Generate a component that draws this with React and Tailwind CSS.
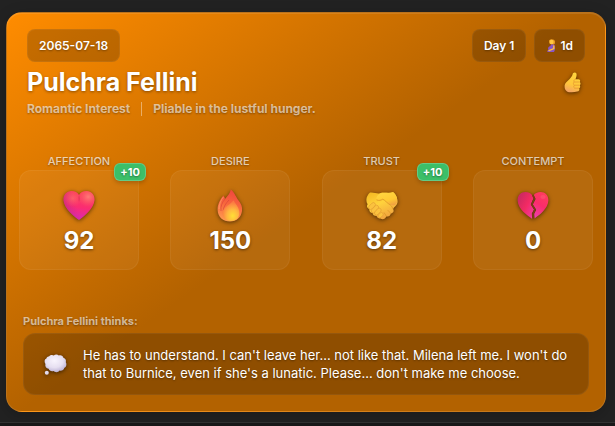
import React from "react";

const glow = "overflow-visible drop-shadow-[0_1px_2px_rgba(0,0,0,0.55)]";

const HEART =
  "M16 30C12 27 1 19 0.5 10C0.3 4.5 4 1 8.5 1C12 1 14.5 2.6 16 5C17.5 2.6 20 1 23.5 1C28 1 31.7 4.5 31.5 10C31 19 20 27 16 30Z";

function Heart() {
  return (
    <svg viewBox="0 0 32 31" className={`h-[31px] w-8 ${glow}`} aria-hidden="true">
      <defs>
        <linearGradient id="heartBase" x1="0.55" y1="0" x2="0.4" y2="1">
          <stop offset="0" stopColor="#fb4458" />
          <stop offset="0.55" stopColor="#fb2c72" />
          <stop offset="1" stopColor="#d529b8" />
        </linearGradient>
        <radialGradient id="heartLeft" cx="0.3" cy="0.25" r="0.3">
          <stop offset="0" stopColor="#ff6f6b" stopOpacity="0.7" />
          <stop offset="1" stopColor="#ff5a66" stopOpacity="0" />
        </radialGradient>
        <radialGradient id="heartRight" cx="0.8" cy="0.2" r="0.35">
          <stop offset="0" stopColor="#ff7a76" />
          <stop offset="1" stopColor="#ff5a66" stopOpacity="0" />
        </radialGradient>
        <linearGradient id="heartEdge" x1="0" y1="0.5" x2="0.4" y2="0.4">
          <stop offset="0" stopColor="#a82a92" stopOpacity="0.5" />
          <stop offset="1" stopColor="#c02a8a" stopOpacity="0" />
        </linearGradient>
      </defs>
      <path d={HEART} fill="url(#heartBase)" />
      <path d={HEART} fill="url(#heartEdge)" />
      <path d={HEART} fill="url(#heartLeft)" />
      <path d={HEART} fill="url(#heartRight)" />
      <path d="M16 5C15.6 7 15.6 9 16 12C16.7 9 16.6 7 16 5Z" fill="#c81e4f" opacity="0.7" />
    </svg>
  );
}

function Flame() {
  return (
    <svg viewBox="0 0 26 33" className={`h-[33px] w-[26px] ${glow}`} aria-hidden="true">
      <defs>
        <linearGradient id="flameOuter" x1="0.6" y1="0" x2="0.4" y2="1">
          <stop offset="0" stopColor="#f0443f" />
          <stop offset="0.5" stopColor="#f86a3c" />
          <stop offset="1" stopColor="#ff9a50" />
        </linearGradient>
        <radialGradient id="flameInner" cx="0.6" cy="0.75" r="0.65">
          <stop offset="0" stopColor="#ffdf35" />
          <stop offset="0.5" stopColor="#ffb740" />
          <stop offset="1" stopColor="#fb7b42" />
        </radialGradient>
      </defs>
      <path
        d="M13.8 0.5C18 4 19.2 8.5 21.2 11C24.2 14.6 25.5 18 25 22C24.2 28.6 19.2 32.5 13 32.5C6 32.5 0.8 28 0.6 21C0.4 15.2 3.2 10.4 6.4 6.5C7.2 7.6 7.8 8.6 8 10C10.6 7.2 13.2 4.2 13.8 0.5Z"
        fill="url(#flameOuter)"
      />
      <path d="M8 10C5.2 13.4 3.4 17 4 22M12 11C9 14.2 6.4 17.6 6.2 22" fill="none" stroke="#d9433b" strokeWidth="0.9" opacity="0.75" />
      <path d="M6.4 8C4 11 2 15 2 20" fill="none" stroke="#ffac7d" strokeWidth="0.8" opacity="0.7" />
      <path
        d="M16.5 11.5C18.6 15 22.4 18.6 22.4 24C22.4 29 18.6 32 14 32C9 32 5.6 28.8 5.6 24C5.6 18.4 11.8 16.8 16.5 11.5Z"
        fill="url(#flameInner)"
      />
    </svg>
  );
}

function Handshake() {
  return (
    <svg viewBox="0 0 33 29" className={`h-[29px] w-[33px] ${glow}`} aria-hidden="true">
      <defs>
        <linearGradient id="handBack" x1="0" y1="0" x2="0.5" y2="1">
          <stop offset="0" stopColor="#f3b51f" />
          <stop offset="0.5" stopColor="#ffd23c" />
          <stop offset="1" stopColor="#f2a63f" />
        </linearGradient>
        <linearGradient id="handFront" x1="0.3" y1="0" x2="0.8" y2="1">
          <stop offset="0" stopColor="#ffd640" />
          <stop offset="0.6" stopColor="#ffc933" />
          <stop offset="1" stopColor="#f09d42" />
        </linearGradient>
      </defs>
      <path
        d="M5 1.5C9 1 12 3 15 2.2C19 0.8 24 2.6 28 1C31 3 33 8 32.4 12C31.8 14.6 29 16 28 18C29.6 20.2 28 22.6 25.8 22.4C25.4 24.8 23.4 26 21.4 25.2C20.4 28 17.6 29 15.4 27.4C13.4 27.6 12 26.6 11.6 25C9.2 25 7.6 23.8 7.6 22C5.2 21.8 4 20 4.4 18C2 17.4 1.4 15 2.6 13.2C0 9 1.8 4.4 5 1.5Z"
        fill="url(#handBack)"
      />
      <path
        d="M15 2.4C19 1.4 24 2.8 28 1.2C31 3 33 8 32 11.6C30.6 14.8 27.6 15.4 24.6 13.2C21.6 11.4 20 9 17.8 8.2C15.8 9.4 13.4 10 11.6 8.8C10.8 6.2 12.8 3.6 15 2.4Z"
        fill="url(#handFront)"
      />
      <path
        d="M11.8 9C14 10 16 9.2 17.8 8.2C20.4 9.4 22 12.2 25.4 14C26.6 15 27.4 16.4 28 18"
        fill="none"
        stroke="#dd9426"
        strokeWidth="0.8"
        strokeLinecap="round"
      />
      <path d="M23 19.4L25.8 22.4M19.2 21.8L21.4 25.2" fill="none" stroke="#dd9426" strokeWidth="0.8" strokeLinecap="round" />
      <g fill="#fbc23e" stroke="#dd9430" strokeWidth="0.5">
        <rect x="3" y="13" width="8" height="4" rx="2" transform="rotate(-45 7 15)" />
        <rect x="5.4" y="16" width="9" height="4" rx="2" transform="rotate(-48 10 18)" />
        <rect x="9.2" y="18.6" width="8" height="4" rx="2" transform="rotate(-48 13 21)" />
        <rect x="12.6" y="22" width="6" height="3.6" rx="1.8" transform="rotate(-48 16 24)" />
      </g>
    </svg>
  );
}

function BrokenHeart() {
  return (
    <svg viewBox="0 0 32 29" className={`h-[29px] w-8 ${glow}`} aria-hidden="true">
      <defs>
        <linearGradient id="brokenLeft" x1="0.1" y1="0.2" x2="0.9" y2="0.9">
          <stop offset="0" stopColor="#cd2962" />
          <stop offset="0.5" stopColor="#f22a63" />
          <stop offset="1" stopColor="#f13a9f" />
        </linearGradient>
        <linearGradient id="brokenRight" x1="0.7" y1="0" x2="0.3" y2="1">
          <stop offset="0" stopColor="#ff3d5c" />
          <stop offset="0.5" stopColor="#fb2c6c" />
          <stop offset="1" stopColor="#ef3dab" />
        </linearGradient>
      </defs>
      <path
        d="M15.2 28C11 25 1 18.4 0.6 9.6C0.4 4.4 4 1 8.4 1C11.4 1 13.6 2.2 15 4L16.4 7.6L13.8 13.4L17 18.6L14.8 22.6Z"
        fill="url(#brokenLeft)"
      />
      <path
        d="M17.6 27.4C21.8 24.6 31 18 31.4 9.6C31.6 4.4 28 1 23.6 1C20.4 1 18 2.4 16.8 4L18.6 8L15.8 13.4L19.2 18.8L17.2 22.8Z"
        fill="url(#brokenRight)"
      />
      <path d="M15.8 4L17.4 7.8L14.8 13.4L18 18.6L16 22.8L16.4 27.6" fill="none" stroke="#7a3d14" strokeWidth="1.6" />
      <ellipse cx="26" cy="6" rx="2.6" ry="2" fill="#ff7484" opacity="0.3" />
    </svg>
  );
}

function ThumbsUp() {
  return (
    <svg viewBox="0 0 17 21" className={`h-[21px] w-[17px] ${glow}`} aria-hidden="true">
      <defs>
        <linearGradient id="thumb" x1="0.6" y1="0" x2="0.3" y2="1">
          <stop offset="0" stopColor="#ffd43c" />
          <stop offset="0.6" stopColor="#ffc63b" />
          <stop offset="1" stopColor="#f3a064" />
        </linearGradient>
      </defs>
      <path
        d="M10.6 0.6C12 0.4 12.8 1.6 12.6 3.2C12.4 5 11.8 6 11.6 7.2H14.4C16 7.2 16.8 8.8 15.8 10C16.8 11 16.8 12.4 15.8 13.2C16.6 14.4 16.2 15.6 15.2 16.2C15.8 18 15 19.4 13.2 19.6C10 20.4 5.4 20.6 3 19.4C1 18.4 0.4 16 0.6 13.6C0.8 10.8 3.4 9.2 5.4 7.2C7.4 5.2 8.2 3.8 8.6 2.2C8.8 1.2 9.6 0.8 10.6 0.6Z"
        fill="url(#thumb)"
      />
      <path
        d="M11.6 7.2C10 7.6 9.4 8.8 10.2 10H15.6M10.2 10C9 11 9.2 12.6 10.4 13.2H15.6M10.4 13.2C9.4 14.2 9.6 15.6 10.6 16.2H15"
        fill="none"
        stroke="#e3922f"
        strokeWidth="0.7"
      />
    </svg>
  );
}

function Expecting() {
  return (
    <svg viewBox="0 0 10 13" className="h-[13px] w-2.5 overflow-visible" role="img" aria-label="Pregnancy">
      <path d="M3 1.4C4.6-0.4 8.6 0 9 2.6C9.2 4.4 8.6 5.4 7.4 5.8L3.4 4.4Z" fill="#e99a1f" />
      <ellipse cx="5.6" cy="3.1" rx="2" ry="2.3" fill="#ffc83f" />
      <path d="M5 5.4H8.2C9.4 7 9.4 10.6 8 13H1.4C1.2 12 1.8 11.2 2.4 10.6C1.4 9.4 2.4 7.4 4.4 7Z" fill="#8a55c4" />
      <path d="M7.8 7L7.8 9.6L3 11.6" fill="none" stroke="#ffc53d" strokeWidth="1.3" strokeLinecap="round" />
    </svg>
  );
}

function ThoughtBubble() {
  return (
    <svg viewBox="0 0 23 21" className={`h-[21px] w-[23px] ${glow}`} aria-hidden="true">
      <defs>
        <radialGradient id="cloud" cx="0.45" cy="0.35" r="0.65">
          <stop offset="0" stopColor="#f8f4fd" />
          <stop offset="0.6" stopColor="#e6dff1" />
          <stop offset="1" stopColor="#bdb3d6" />
        </radialGradient>
      </defs>
      <path
        d="M5 2.6C6.4 0.8 8.6 0.8 9.8 1.6C11.2 0 13.6 0.2 14.8 1.6C17 0.8 19 1.8 19.4 3.8C21.6 4.4 22.4 6.6 21.8 8.2C23 10 22.4 13.2 20.4 13.8C19.8 16 17.6 17.4 15.6 16.6C14.2 18.6 11 18.6 9.6 17C7.4 17.8 5.2 16.6 4.6 14.8C2.2 14.6 0.8 12.4 1.4 10C0 7.4 0.4 5 2.4 4.4C2.8 3.2 3.8 2.6 5 2.6Z"
        fill="url(#cloud)"
      />
      <circle cx="2.8" cy="18.8" r="2" fill="#e2dbef" />
    </svg>
  );
}

const softShadow = "[text-shadow:0_1px_2px_rgba(0,0,0,0.35)]";

function Pill({ children }) {
  return (
    <span className={`flex h-[33px] items-center gap-1 rounded-lg border border-white/5 bg-black/20 px-[11px] text-xs font-semibold text-white ${softShadow}`}>
      {children}
    </span>
  );
}

const stats = [
  { name: "AFFECTION", value: 92, change: "+10", Icon: Heart },
  { name: "DESIRE", value: 150, Icon: Flame },
  { name: "TRUST", value: 82, change: "+10", Icon: Handshake },
  { name: "CONTEMPT", value: 0, Icon: BrokenHeart },
];

function Stat({ name, value, change, Icon }) {
  return (
    <li className="flex w-[120px] flex-col">
      <h2 className={`text-center text-[11px] leading-[18px] font-medium text-white/70 ${softShadow}`}>{name}</h2>
      <div className="relative flex h-[100px] flex-col items-center rounded-xl border border-white/5 bg-white/5 pt-4">
        <div className="flex h-9 items-center">
          <Icon />
        </div>
        <p className="mt-1 text-2xl leading-7 font-bold text-white [text-shadow:0_1px_3px_rgba(0,0,0,0.5)]">{value}</p>
        {change && (
          <span className="absolute -top-2 -right-2 flex h-[18px] w-8 items-center justify-center rounded-md border border-white/20 bg-[#3cbf68] text-[11px] font-bold text-white shadow-[0_2px_4px_rgba(0,0,0,0.2)] [text-shadow:0_1px_2px_rgba(0,0,0,0.4)]">
            {change}
          </span>
        )}
      </div>
    </li>
  );
}

export default function App() {
  return (
    <main className="flex min-h-screen flex-col bg-[#191919] font-['Inter','Liberation_Sans',sans-serif]">
      <div className="border-b border-[#333333] bg-[#222222] pt-3 pr-[9px] pb-2.5 pl-1.5">
        <article className="mx-auto flex max-w-[600px] flex-col rounded-2xl border border-white/10 bg-[linear-gradient(145deg,#ff8c00_0%,#b36200_50%)] pb-4 shadow-[0_4px_16px_rgba(0,0,0,0.2),inset_0_1px_0_rgba(255,255,255,0.1)]">
          <header className="px-5 pt-4">
            <div className="flex items-center justify-between">
              <Pill>2065-07-18</Pill>
              <div className="flex gap-2">
                <Pill>Day 1</Pill>
                <Pill>
                  <Expecting />
                  1d
                </Pill>
              </div>
            </div>
            <div className="mt-1 flex items-center justify-between pr-1">
              <h1 className="text-[25px] leading-8 font-bold text-white [text-shadow:0_1px_3px_rgba(0,0,0,0.4)]">Pulchra Fellini</h1>
              <ThumbsUp />
            </div>
            <div className={`flex items-center text-xs leading-[22px] font-bold text-white/60 ${softShadow}`}>
              <p>Romantic Interest</p>
              <span className="mx-[11px] h-3.5 w-px bg-white/40" />
              <p>Pliable in the lustful hunger.</p>
            </div>
          </header>

          <ul className="mt-8 flex justify-between px-3">
            {stats.map((s) => (
              <Stat key={s.name} {...s} />
            ))}
          </ul>

          <section className="mt-[43px] px-4">
            <h2 className={`mb-1 text-[11px] leading-4 font-bold text-white/60 ${softShadow}`}>Pulchra Fellini thinks:</h2>
            <div className="flex items-center gap-4 rounded-xl border border-white/5 bg-black/20 py-3 pr-4 pl-5">
              <ThoughtBubble />
              <p className="flex-1 text-[13px] leading-[18px] text-white [text-shadow:0_1px_2px_rgba(0,0,0,0.4)]">
                He has to understand. I can't leave her... not like that. Milena left me. I won't do that to Burnice, even if she's a lunatic. Please... don't make me choose.
              </p>
            </div>
          </section>
        </article>
      </div>
    </main>
  );
}
